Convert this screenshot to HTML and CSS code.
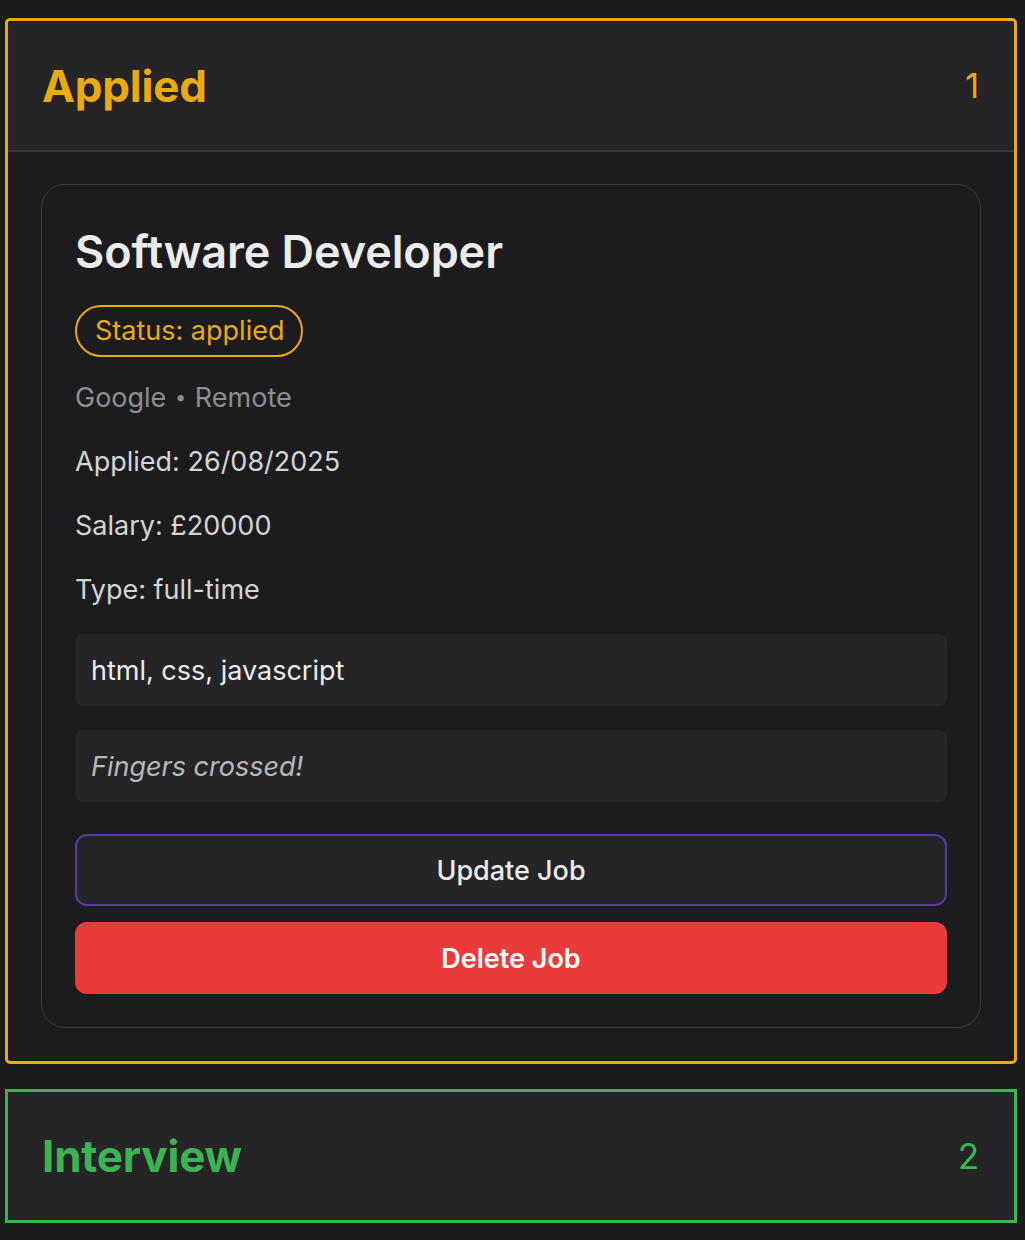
FILE: index.html
```html
<!DOCTYPE html>
<html lang="en">
<head>
<meta charset="utf-8">
<title>Job Board</title>
<link rel="stylesheet" href="styles.css">
</head>
<body>
<main class="board">
  <section class="column column-applied">
    <header class="column-header">
      <h2 class="column-title">Applied</h2>
      <span class="column-count">1</span>
    </header>
    <div class="column-body">
      <article class="job-card">
        <h3 class="job-title">Software Developer</h3>
        <span class="status-pill">Status: applied</span>
        <p class="job-meta">Google <span class="dot">•</span> Remote</p>
        <p class="job-line">Applied: 26/08/2025</p>
        <p class="job-line">Salary: £20000</p>
        <p class="job-line">Type: full-time</p>
        <div class="info-box">html, css, javascript</div>
        <div class="info-box notes">Fingers crossed!</div>
        <div class="actions">
          <button class="btn btn-update">Update Job</button>
          <button class="btn btn-delete">Delete Job</button>
        </div>
      </article>
    </div>
  </section>
  <section class="column column-interview">
    <header class="column-header">
      <h2 class="column-title">Interview</h2>
      <span class="column-count">2</span>
    </header>
  </section>
</main>
</body>
</html>
```

FILE: styles.css
```css
* { box-sizing: border-box; }

html, body {
  margin: 0;
  padding: 0;
  background: #1b1b1d;
  font-family: Inter, "Noto Sans", "Liberation Sans", sans-serif;
  color: #e6e6e8;
}

.board {
  display: flex;
  flex-direction: column;
  gap: 25px;
  padding: 18px 8px 0 5px;
}

.column {
  border: 3px solid #eaaa14;
  border-radius: 5px;
  background: #1c1c1e;
  overflow: hidden;
}

.column-applied { border-color: #eaaa14; color: #eaaa14; }
.column-interview { border: 3px solid #3bb552; color: #3bb552; border-radius: 0; height: 134px; }

.column-header {
  display: flex;
  align-items: center;
  justify-content: space-between;
  height: 128px;
  padding: 0 35px 0 34px;
  background: #252527;
}

.column-applied .column-header {
  border-bottom: 2px solid #38383b;
  height: 131px;
}

.column-title {
  margin: 0;
  font-size: 44px;
  font-weight: 700;
  letter-spacing: -0.2px;
}

.column-count {
  font-size: 34px;
  font-weight: 400;
}

.column-interview .column-count { font-size: 35px; }

.column-body {
  padding: 32px 33px 33px 33px;
}

.job-card {
  display: flex;
  flex-direction: column;
  align-items: flex-start;
  border: 1.5px solid #3a3a3d;
  border-radius: 24px;
  background: #1c1c1e;
  padding: 40px 33px 33px 33px;
}

.job-title {
  margin: 0;
  font-size: 45px;
  font-weight: 600;
  color: #ececee;
  line-height: 1.2;
  letter-spacing: -0.1px;
}

.status-pill {
  margin-top: 26px;
  display: inline-block;
  border: 2px solid #eaaa14;
  border-radius: 999px;
  padding: 0 17px 0 18px;
  height: 52px;
  line-height: 48px;
  font-size: 27px;
  color: #eaaa14;
}

.job-meta {
  margin: 20px 0 0;
  font-size: 27px;
  line-height: 40px;
  color: #8d8e94;
}

.dot { margin: 0 1px; font-size: 20px; vertical-align: 3px; }

.job-line {
  margin: 24px 0 0;
  font-size: 27px;
  line-height: 40px;
  color: #d4d4d7;
}

.info-box {
  align-self: stretch;
  margin-top: 24px;
  height: 72px;
  display: flex;
  align-items: center;
  padding: 0 16px;
  background: #252527;
  border-radius: 8px;
  font-size: 27px;
  color: #ececee;
}

.info-box.notes {
  font-style: italic;
  color: #b9b9bd;
}

.actions {
  align-self: stretch;
  margin-top: 32px;
  display: flex;
  flex-direction: column;
  gap: 16px;
}

.btn {
  height: 72px;
  border-radius: 12px;
  font-family: Inter, "Noto Sans", "Liberation Sans", sans-serif;
  font-size: 27px;
  cursor: pointer;
}

.btn-update {
  background: #252527;
  border: 2px solid #5a38a6;
  color: #ececee;
  font-weight: 500;
}

.btn-delete {
  background: #e93b3a;
  border: none;
  color: #ffffff;
  font-weight: 600;
}
```
